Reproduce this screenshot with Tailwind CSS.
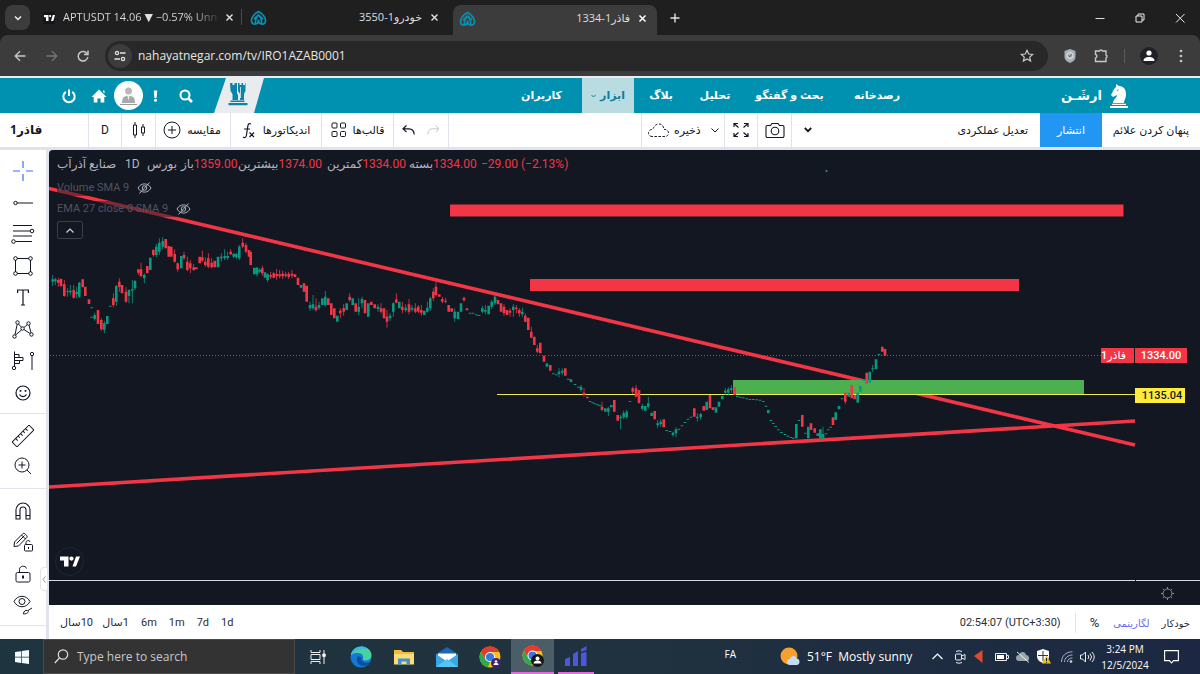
<!DOCTYPE html>
<html lang="fa">
<head>
<meta charset="utf-8">
<title>فاذر1-1334</title>
<script src="https://cdn.jsdelivr.net/npm/@tailwindcss/browser@4"></script>
</head>
<body class="flex h-screen flex-col overflow-hidden bg-[#1f1f1f] font-['Open_Sans','DejaVu_Sans',sans-serif] text-[#131722]">

<!-- Browser tabs -->
<div class="flex h-[35px] shrink-0 items-end bg-[#1f1f1f] text-[11px] text-[#dfdfdf]">
  <button aria-label="Search tabs" class="mb-[5px] ml-[5px] flex h-[25px] w-[25px] items-center justify-center rounded-lg bg-[#3c3c3c]">
    <svg width="10" height="10" viewBox="0 0 10 10" fill="none" stroke="#eee" stroke-width="1.5"><path d="M2 3.500 5 6.500 8 3.500"/></svg>
  </button>
  <div class="flex h-[35px] w-[211px] items-center gap-2 pl-[13px] pr-3">
    <svg class="shrink-0" width="12" height="12" viewBox="0 0 12 12"><rect width="12" height="12" rx="2" fill="#15161c"/><path d="M1 3h4.500v6H3V5.300H1zM8 9h2.300L12 3H9.800z" fill="#fff"/><circle cx="7.200" cy="4.100" r="1.100" fill="#fff"/></svg>
    <span class="shrink-0 whitespace-nowrap bg-linear-to-r from-[#dfdfdf] from-85% to-[#3a3a3a] bg-clip-text text-transparent">APTUSDT 14.06 ▼ −0.57% Unn</span>
    <button aria-label="Close" class="ml-auto"><svg width="9" height="9" viewBox="0 0 9 9" stroke="#e3e3e3" stroke-width="1.400"><path d="M1.500 1.500l6 6M7.500 1.500l-6 6"/></svg></button>
  </div>
  <div class="mb-2.5 h-4 w-px bg-[#4a4a4a]"></div>
  <div class="flex h-[35px] w-[211px] items-center pl-2 pr-3.5">
    <svg width="17" height="16" viewBox="0 0 17 16" fill="none" stroke="#0b8fb0" stroke-width="1.700"><path d="M7.500 6.500C6 8 5 10 5.500 14 3 14.500 1.500 13 1.500 10.500c0-3.500 2.500-5.500 4-7L8.500 1.500l3 2c1.500 1.500 4 3.500 4 7 0 2.500-1.500 4-4 3.500C12 10 11 8 9.500 6.500M5.500 14c2.500 0 3-2 3-4.500 0 2.500.5 4.500 3 4.500M4 9l4.500-4L13 9"/></svg>
    <span dir="rtl" class="ml-auto mr-2">خودرو1-3550</span>
    <button aria-label="Close"><svg width="9" height="9" viewBox="0 0 9 9" stroke="#e3e3e3" stroke-width="1.400"><path d="M1.500 1.500l6 6M7.500 1.500l-6 6"/></svg></button>
  </div>
  <div class="flex h-[30px] w-[204px] items-center rounded-t-lg bg-[#3c3c3c] pb-[3px] pl-1.5 pr-2.5">
    <svg width="17" height="16" viewBox="0 0 17 16" fill="none" stroke="#0b8fb0" stroke-width="1.700"><path d="M7.500 6.500C6 8 5 10 5.500 14 3 14.500 1.500 13 1.500 10.500c0-3.500 2.500-5.500 4-7L8.500 1.500l3 2c1.500 1.500 4 3.500 4 7 0 2.500-1.500 4-4 3.500C12 10 11 8 9.500 6.500M5.500 14c2.500 0 3-2 3-4.500 0 2.500.5 4.500 3 4.500M4 9l4.500-4L13 9"/></svg>
    <span dir="rtl" class="ml-auto mr-2">فاذر1-1334</span>
    <button aria-label="Close"><svg width="9" height="9" viewBox="0 0 9 9" stroke="#fff" stroke-width="1.500"><path d="M1.500 1.500l6 6M7.500 1.500l-6 6"/></svg></button>
  </div>
  <button aria-label="New tab" class="flex h-[35px] w-[36px] items-center justify-center"><svg width="10" height="10" viewBox="0 0 10 10" stroke="#e3e3e3" stroke-width="1.400"><path d="M5 .5v9M.5 5h9"/></svg></button>
  <div class="ml-auto flex h-[35px] items-center">
    <button aria-label="Minimize" class="flex w-10 justify-center"><svg width="10" height="10" viewBox="0 0 10 10" stroke="#ddd"><path d="M.5 5.500h9"/></svg></button>
    <button aria-label="Restore" class="flex w-10 justify-center"><svg width="10" height="10" viewBox="0 0 10 10" fill="none" stroke="#eee"><path d="M1 3h6v6H1zM3 3V1h6v6H7"/></svg></button>
    <button aria-label="Close window" class="flex w-10 justify-center"><svg width="10" height="10" viewBox="0 0 10 10" stroke="#eee"><path d="M1 1l8.500 8.500M9.500 1 1 9.500"/></svg></button>
  </div>
</div>

<!-- Address bar -->
<div class="flex h-[41px] shrink-0 items-center rounded-t-lg bg-[#3c3c3c] text-[12px] text-[#e6e6e6]">
  <button aria-label="Back" class="ml-3 flex w-4 justify-center"><svg width="12" height="12" viewBox="0 0 12 12" fill="none" stroke="#c7c7c7" stroke-width="1.300"><path d="M11.500 6H1.500M6 1.200 1.200 6 6 10.800"/></svg></button>
  <button aria-label="Forward" class="ml-4 flex w-4 justify-center"><svg width="12" height="12" viewBox="0 0 12 12" fill="none" stroke="#757575" stroke-width="1.300"><path d="M.5 6h10M6 1.200 10.800 6 6 10.800"/></svg></button>
  <button aria-label="Reload" class="ml-[11px] flex w-6 justify-center"><svg width="12" height="12" viewBox="0 0 12 12" fill="none" stroke="#c7c7c7" stroke-width="1.500"><path d="M10.300 4A4.800 4.800 0 1 0 10.800 7M11 .5V4.500H7"/></svg></button>
  <div class="ml-2.5 mr-1.5 flex h-[30px] flex-1 items-center rounded-full bg-[#282828] pl-[3px] pr-3.5">
    <button aria-label="Site information" class="flex h-[24px] w-[24px] items-center justify-center rounded-full bg-[#3c3c3c]"><svg width="12" height="12" viewBox="0 0 12 12" fill="none" stroke="#e3e3e3" stroke-width="1.300"><circle cx="3" cy="3" r="1.600"/><path d="M6 3h5.500M.5 9h5.500"/><circle cx="9" cy="9" r="1.600"/></svg></button>
    <input aria-label="Address" value="nahayatnegar.com/tv/IRO1AZAB0001" class="ml-1.5 min-w-0 flex-1 bg-transparent outline-none">
    <button aria-label="Bookmark"><svg width="14" height="14" viewBox="0 0 14 14" fill="none" stroke="#ccc" stroke-width="1.200"><path d="M7 1.300 8.700 5l4 .4-3 2.700.9 4L7 10l-3.600 2.100.9-4-3-2.700 4-.4z"/></svg></button>
  </div>
  <div class="ml-2.5 flex items-center">
    <svg width="12" height="16" viewBox="0 0 12 16"><path d="M6 1 11.500 3v6c0 3-3 5-5.500 6C3.500 14 .5 12 .5 9V3z" fill="#aab0b5"/><circle cx="6" cy="7.500" r="3" fill="none" stroke="#e5e8ea"/><path d="m4.500 7.500 1.200 1.300 2-2.500" fill="none" stroke="#555"/></svg>
    <svg class="ml-[18px]" width="15" height="15" viewBox="0 0 15 15" fill="none" stroke="#c7c7c7" stroke-width="1.400"><path d="M1.500 3h4a1.600 1.600 0 0 1 3 0H12v4a1.600 1.600 0 0 1 0 3v3.500H1.500V10a1.800 1.800 0 0 0 0-3.500z"/></svg>
    <div class="mx-[15px] h-3.5 w-px bg-[#5c5c5c]"></div>
    <svg width="18" height="18" viewBox="0 0 18 18"><circle cx="9" cy="9" r="9" fill="#202124"/><circle cx="9" cy="6" r="2.600" fill="#fff"/><path d="M3.500 14c0-3 2.500-4 5.500-4s5.500 1 5.500 4z" fill="#fff"/></svg>
    <button aria-label="Menu" class="ml-[21px] mr-[17px]"><svg width="4" height="14" viewBox="0 0 4 14" fill="#c7c7c7"><circle cx="2" cy="2" r="1.300"/><circle cx="2" cy="7" r="1.300"/><circle cx="2" cy="12" r="1.300"/></svg></button>
  </div>
</div>

<!-- Site header -->
<header class="flex h-[37px] shrink-0 items-stretch border-t-2 border-[#e8eef0] bg-[#0090b0] text-[11px] font-bold text-white">
  <div class="flex w-[214px] items-center pl-[61px]">
    <a href="#" aria-label="خروج"><svg width="16" height="16" viewBox="0 0 16 16" fill="none" stroke="#fff" stroke-width="2"><path d="M4.800 3.800a5.700 5.700 0 1 0 6.400 0M8 1.500V8"/></svg></a>
    <a href="#" aria-label="خانه" class="ml-3.5"><svg width="16" height="14" viewBox="0 0 16 14" fill="#fff"><path d="M8 .5 15.500 8H13.300v5.500H9.600V9.500H6.400v4H2.700V8H.5zM12 1.500h1.500v3L12 3z"/></svg></a>
    <a href="#" aria-label="پروفایل" class="ml-[7px]"><svg width="29" height="29" viewBox="0 0 29 29"><circle cx="14.500" cy="14.500" r="14.500" fill="#fff"/><circle cx="14.500" cy="10" r="3.500" fill="#b9b9b9"/><path d="M8 22c0-6 2-7 6.500-7s6.500 1 6.500 7z" fill="#a9a9a9"/><path d="M6 23.500h17" stroke="#999"/><path d="m13.500 15 1 5 1-5z" fill="#eee"/></svg></a>
    <a href="#" aria-label="اعلان" class="ml-2.5"><svg width="5" height="12" viewBox="0 0 5 12" fill="#fff"><path d="M.8.500h3.400L3.600 8H1.400z"/><circle cx="2.500" cy="10.300" r="1.500"/></svg></a>
    <a href="#" aria-label="جستجو" class="ml-[21px]"><svg width="14" height="14" viewBox="0 0 14 14" fill="none" stroke="#fff" stroke-width="2"><circle cx="6" cy="6" r="4.500"/><path d="m9.500 9.500 3.500 3.500" stroke-width="2.600"/></svg></a>
  </div>
  <a href="#" aria-label="رخ"><svg width="50" height="35" viewBox="0 0 50 35"><path d="M12 0h38L40 35H0z" fill="#e8ecee"/><g fill="#0b84a8"><path d="M16 5h2.500v2h2V5h2.500v10l1 2v5h-5.500v-6L16.500 13zM24 5h1.500v2h2V5H29v2h2V5h.5v8l-1.500 3v6h-4v-6l-2-3zM16.500 22.500h14V24h-14zM14.500 25h19v2.200h-19z"/></g><path d="M23.500 8v8M26.500 9v11" stroke="#e8ecee" stroke-width=".8"/></svg></a>
  <nav class="ml-auto flex items-stretch whitespace-nowrap" aria-label="منو">
    <a href="#" class="flex w-[81px] items-center justify-center">کاربران</a>
    <a href="#" class="flex w-[52px] items-center justify-center gap-1 bg-[#b9dbe2] text-[#0b7f9e]"><svg width="5" height="4" viewBox="0 0 5 4" fill="none" stroke="#0b7f9e"><path d="m.5 1 2 2 2-2"/></svg>ابزار</a>
    <a href="#" class="flex w-[54px] items-center justify-center">بلاگ</a>
    <a href="#" class="flex w-[54px] items-center justify-center">تحلیل</a>
    <a href="#" class="flex w-[95px] items-center justify-center">بحث و گفتگو</a>
    <a href="#" class="flex w-[80px] items-center justify-center">رصدخانه</a>
  </nav>
  <a href="#" class="ml-[144px] mr-[71px] flex items-center gap-1.5 text-[13px]"><span class="w-[42px]">ارشَـن</span>
    <svg width="20" height="24" viewBox="0 0 20 24" fill="#fff"><path d="M4 19c0-4 4-5 4-8l-4 2-2-2 3-6 2-2V0l3 2c5 0 7 4 7 8 0 5-2 6-2 9zM3 19.800h14v1.200H3zM1 22h18v2H1z"/><path d="M8 6.500 9.500 6" stroke="#0090b0"/></svg>
  </a>
</header>

<!-- Chart toolbar -->
<div class="flex h-[37px] shrink-0 items-stretch border-b-3 border-[#e0e3eb] bg-white text-[11px] whitespace-nowrap *:border-[#e0e3eb]">
  <button class="flex w-[88px] items-center pl-2.5 text-[12px] font-bold"><bdi dir="rtl">فاذر1</bdi></button>
  <button class="w-[33px] border-l font-['Roboto'] text-[12px]">D</button>
  <button aria-label="Candles" class="flex w-[34px] items-center justify-center border-l"><svg width="14" height="18" viewBox="0 0 14 18" fill="none" stroke="#131722"><path d="M1.500 4h3v10h-3zM3 1v3M3 14v3M9.500 6h3v6h-3zM11 3v3M11 12v3"/></svg></button>
  <button class="flex w-[75px] items-center justify-center gap-1.5 border-l pr-0.5"><svg width="18" height="18" viewBox="0 0 18 18" fill="none" stroke="#131722"><circle cx="9" cy="9" r="8"/><path d="M9 5v8M5 9h8"/></svg>مقایسه</button>
  <button class="flex w-[91px] items-center justify-center gap-2 border-l"><svg width="13" height="17" viewBox="0 0 13 17" fill="none" stroke="#131722" stroke-width="1.200"><path d="M9 2C6.500.5 6 2.500 5.500 6L4.500 13c-.5 3-2 3-3.500 2M2 7h6M7.500 10.500l4.500 4.500M12 10.500 7.500 15"/></svg>اندیکاتورها</button>
  <button class="flex w-[72px] items-center justify-center gap-1.5 border-l"><svg width="16" height="16" viewBox="0 0 16 16" fill="none" stroke="#131722"><rect x="1" y="1" width="5" height="5" rx="1"/><rect x="9.500" y="1" width="5" height="5" rx="1"/><rect x="1" y="9.500" width="5" height="5" rx="1"/><rect x="9.500" y="9.500" width="5" height="5" rx="1"/></svg>قالب‌ها</button>
  <div class="flex w-[56px] items-center justify-center gap-3 border-x">
    <button aria-label="Undo"><svg width="13" height="10" viewBox="0 0 13 10" fill="none" stroke="#131722" stroke-width="1.200"><path d="M4.500.5 1 3.800l3.500 3.300M1 3.800h6c3 0 5 1.500 5.200 5.700"/></svg></button>
    <button aria-label="Redo"><svg width="13" height="10" viewBox="0 0 13 10" fill="none" stroke="#c5c8d0"><path d="M8.500.5 12 3.800 8.500 7.100M12 3.800H6C3 3.800 1 5.300.8 9.500"/></svg></button>
  </div>
  <div class="flex-[57]"></div>
  <button class="flex w-[83px] items-center justify-center gap-1 border-l"><svg width="22" height="16" viewBox="0 0 22 16" fill="none" stroke="#131722" stroke-dasharray="2.500 1.500"><path d="M4 14.500a3.500 3.500 0 0 1 0-7C5.500 7.500 6 2 11 2c4 0 4.500 3.500 5 5.500 2-.5 4.500 1 4.500 3.500 0 2-1.500 3.500-3 3.500z"/></svg>ذخیره<svg class="ml-1.5" width="8" height="5" viewBox="0 0 8 5" fill="none" stroke="#131722"><path d="m.5.500 3.500 3.500L7.500.500"/></svg></button>
  <button aria-label="Fullscreen" class="flex w-[33px] items-center justify-center border-l"><svg width="16" height="16" viewBox="0 0 16 16" fill="none" stroke="#131722" stroke-width="1.200"><path d="M1 5V1.500h4M1 1.500l4.500 4M15 5V1.500h-4M15 1.500l-4.500 4M1 11v3.500h4M1 14.500l4.500-4M15 11v3.500h-4M15 14.500l-4.500-4"/></svg></button>
  <button aria-label="Snapshot" class="flex w-[35px] items-center justify-center border-x"><svg width="20" height="17" viewBox="0 0 20 17" fill="none" stroke="#131722" stroke-width="1.100"><path d="M2.500 3.500h3l1.500-2h6l1.500 2h3a1.500 1.500 0 0 1 1.500 1.500v9a1.500 1.500 0 0 1-1.500 1.500h-15A1.500 1.500 0 0 1 1 14V5a1.500 1.500 0 0 1 1.500-1.500z"/><circle cx="10" cy="9" r="3.800"/></svg></button>
  <button aria-label="More" class="ml-3"><svg width="8" height="6" viewBox="0 0 8 6" fill="none" stroke="#131722" stroke-width="1.800"><path d="m.8 1 3.200 3.200L7.200 1"/></svg></button>
  <div class="flex-[43]"></div>
  <button class="mr-3">تعدیل عملکردی</button>
  <button class="w-[62px] bg-[#2196f3] text-white">انتشار</button>
  <button class="w-[98px]">پنهان کردن علائم</button>
</div>

<main class="flex min-h-0 flex-1 bg-[#e0e3eb]">
  <!-- Drawing tools -->
  <aside class="relative mr-[3px] flex w-[46px] shrink-0 flex-col bg-white [&_button]:flex [&_button]:h-7 [&_button]:items-center [&_button]:justify-center">
    <div class="flex h-[264px] flex-col justify-between border-b border-[#e0e3eb] pb-1.5 pt-[7px]">
      <button aria-label="Crosshair"><svg width="20" height="20" viewBox="0 0 20 20" stroke="#3d6df5" stroke-width="1.200"><path d="M10 0v7M10 13v7M0 10h7M13 10h7"/></svg></button>
      <button aria-label="Trend line"><svg width="20" height="6" viewBox="0 0 20 6" fill="none" stroke="#131722"><circle cx="2.500" cy="3" r="1.700"/><path d="M4 3h16"/></svg></button>
      <button aria-label="Fib retracement"><svg width="24" height="20" viewBox="0 0 24 20" fill="none" stroke="#131722"><path d="M2 1.500h19M2 7h17M2 12h19M4.500 17.500H21"/><circle cx="21" cy="7" r="1.800" fill="#fff"/><circle cx="2.500" cy="17.500" r="1.800"/></svg></button>
      <button aria-label="Shapes"><svg width="20" height="20" viewBox="0 0 20 20" fill="none" stroke="#131722"><path d="M4 2.500h12M4 17.500h12M2.500 4v12M17.500 4v12"/><circle cx="2.500" cy="2.500" r="1.800"/><circle cx="17.500" cy="2.500" r="1.800"/><circle cx="2.500" cy="17.500" r="1.800"/><circle cx="17.500" cy="17.500" r="1.800"/></svg></button>
      <button aria-label="Text"><svg width="12" height="17" viewBox="0 0 12 17" fill="none" stroke="#131722" stroke-width="1.200"><path d="M.6 4V1h10.800v3M6 1v15M4 16h4"/></svg></button>
      <button aria-label="Patterns"><svg width="22" height="19" viewBox="0 0 22 19" fill="none" stroke="#131722"><circle cx="5.500" cy="2.500" r="1.700"/><circle cx="16.500" cy="3.500" r="1.700"/><circle cx="10.500" cy="8.500" r="1.700"/><circle cx="2.500" cy="16.500" r="1.700"/><circle cx="19.500" cy="14.500" r="1.700"/><path d="M5.200 4.200 3 14.800M6.500 4l3 3.300M12 7.500l3.200-2.800M17 5.200l2 7.600M3.500 15l6-5M12 9.500l6 4"/></svg></button>
      <button aria-label="Positions"><svg width="24" height="20" viewBox="0 0 24 20" fill="none" stroke="#131722"><path d="M3.500.5V15M3.500 3.500H8v3h4v3H8.500v3h-5M3.500 6.500H8M3.500 9.500h5M21 5v14"/><circle cx="3" cy="17" r="1.700"/><circle cx="21" cy="3" r="1.700"/></svg></button>
      <button aria-label="Emoji"><svg width="16" height="16" viewBox="0 0 16 16" fill="none" stroke="#131722" stroke-width="1.200"><circle cx="8" cy="8" r="7"/><path d="M4.500 9.500c1.500 2.800 5.500 2.800 7 0"/><path d="M5.500 5v1.800M10.500 5v1.800" stroke-width="1.700"/></svg></button>
    </div>
    <div class="flex h-[75px] flex-col justify-between border-b border-[#e0e3eb] py-2">
      <button aria-label="Measure"><svg width="22" height="22" viewBox="0 0 22 22" fill="none" stroke="#131722"><g transform="rotate(-45 11 11)"><rect x="-1" y="7.500" width="24" height="7" rx="1"/><path d="M4 7.500v3M7.500 7.500v2.500M11 7.500v3M14.500 7.500v2.500M18 7.500v3"/></g></svg></button>
      <button aria-label="Zoom in"><svg width="18" height="18" viewBox="0 0 18 18" fill="none" stroke="#131722"><circle cx="8" cy="8" r="7"/><path d="M8 4.500v7M4.500 8h7M13 13l4 4"/></svg></button>
    </div>
    <div class="flex h-[137px] flex-col justify-between border-b border-[#e0e3eb] pb-1.5 pt-2">
      <button aria-label="Magnet"><svg width="16" height="18" viewBox="0 0 16 18" fill="none" stroke="#131722" stroke-width="1.100"><path d="M1 17V8a7 7 0 0 1 14 0v9h-4V8a3 3 0 0 0-6 0v9zM1 13.500h4M11 13.500h4"/></svg></button>
      <button aria-label="Keep drawing"><svg width="21" height="20" viewBox="0 0 21 20" fill="none" stroke="#131722"><path d="m1.500 10 8.500-8.500c1-1 5 2.500 4 3.800L5.500 14l-4.500.5zM3.500 11.500l8-8M8.500 3l4 4"/><rect x="11.500" y="12.500" width="8" height="6.500" rx="1"/><path d="M13 12.500v-2c0-2.500 4-2.500 4-.5M15.500 15v2"/></svg></button>
      <button aria-label="Lock"><svg width="16" height="18" viewBox="0 0 16 18" fill="none" stroke="#131722"><rect x="1" y="7.500" width="14" height="9.500" rx="1.500"/><path d="M4.500 7.500V4.500c0-4 6-4.500 7-1"/><path d="M8 10.500v3" stroke-width="2"/></svg></button>
      <button aria-label="Hide"><svg width="20" height="20" viewBox="0 0 20 20" fill="none" stroke="#131722"><path d="M1 6.500C4.500-.5 13.500-.5 17 6.500c-3.500 7-12.500 7-16 0z"/><circle cx="9" cy="6.500" r="3"/><path d="M10.500 19c0-3 2-4 4-3.500s.5 3.500-4 3.500zM15 15.500l4-2.500"/></svg></button>
    </div>
    <button aria-label="Collapse" class="absolute bottom-[48px] right-[-2px] !h-6 w-2 rounded-l border border-[#e0e3eb] bg-white"><svg width="4" height="7" viewBox="0 0 4 7" fill="none" stroke="#9598a1"><path d="M3.500.5 1 3.500l2.500 3"/></svg></button>
  </aside>

  <section class="flex min-w-0 flex-1 flex-col">
    <div class="relative min-h-0 flex-1 rounded-tl bg-[#131722]">
      <svg id="chart" class="absolute inset-0 h-full w-full" viewBox="49 150 1151 455" preserveAspectRatio="none" role="img" aria-label="نمودار فاذر1">
        <path d="M50 355.500H1101" stroke="#8a5560" stroke-dasharray="1 2"/>
        <g stroke="#f23645" stroke-width="3.600"><path d="M49 188.500 1135 445M49 487 1135 421"/></g>
        <path d="M450 204.500H1123.500V216.500H450zM530 279H1019V291H530z" fill="#f23645"/>
        <path d="M733 380H1084V394H733z" fill="#4caf50"/>
        <path d="M497 394.500H1135" stroke="#f0ec50" stroke-width="1.200"/>
        <g id="candles"></g>
        <path d="M49 580.500H1135M1136 580.500H1200" stroke="#d6d9e0"/>
        <circle cx="826.500" cy="171" r="1" fill="#3aa655"/>
      </svg>

      <!-- Legend -->
      <div class="absolute left-2 top-1.5 flex flex-col items-start text-[11px] text-[#b2b5be]">
        <div class="flex h-4 items-center whitespace-nowrap font-['Roboto','DejaVu_Sans'] text-[12px]">
          <span class="w-[68px]">صنایع آذرآب</span><span class="w-[22px]">1D</span><span class="w-[34px]">بورس</span>
          <span class="flex w-[57px] text-[#f23645]"><span class="text-[#b2b5be]">باز</span>1359.00</span>
          <span class="flex w-[89px] text-[#f23645]"><span class="text-[#b2b5be]">بیشترین</span>1374.00</span>
          <span class="flex w-[82px] text-[#f23645]"><span class="text-[#b2b5be]">کمترین</span>1334.00</span>
          <span class="flex w-[72px] text-[#f23645]"><span class="text-[#b2b5be]">بسته</span>1334.00</span>
          <span class="text-[#f23645]">−29.00 (−2.13%)</span>
        </div>
        <div class="mt-2 flex h-4 items-center gap-2 bg-[#131722]/50 font-['Roboto'] text-[#50535e]">Volume SMA 9
          <svg width="15" height="12" viewBox="0 0 15 12" fill="none" stroke="#b2b5be"><path d="M1 6C4 .5 11 .5 14 6c-3 5.500-10 5.500-13 0zM12.500.5l-10 11"/><circle cx="7.500" cy="6" r="2.300"/></svg></div>
        <div class="mt-[5px] flex h-4 items-center gap-2 bg-[#131722]/50 font-['Roboto'] text-[#50535e]">EMA 27 close 0 SMA 9
          <svg width="15" height="12" viewBox="0 0 15 12" fill="none" stroke="#b2b5be"><path d="M1 6C4 .5 11 .5 14 6c-3 5.500-10 5.500-13 0zM12.500.5l-10 11"/><circle cx="7.500" cy="6" r="2.300"/></svg></div>
        <button aria-label="Collapse legend" class="mt-1 flex h-[18px] w-[26px] items-center justify-center rounded-xs border border-[#3a3e4a]"><svg width="8" height="5" viewBox="0 0 8 5" fill="none" stroke="#d1d4dc" stroke-width="1.200"><path d="m.5 4.500 3.500-3.500 3.500 3.500"/></svg></button>
      </div>

      <!-- Price labels -->
      <div class="absolute right-[13px] top-[43.600%] flex h-[15px] gap-px text-[11px] leading-[15px] text-white">
        <span dir="rtl" class="w-[33px] bg-[#f23645] pr-2 font-['Roboto','DejaVu_Sans'] font-medium">فاذر1</span><span class="w-[52px] bg-[#f23645] text-center font-['Roboto'] font-medium">1334.00</span>
      </div>
      <span class="absolute right-[15px] top-[52.200%] h-[15px] w-[50px] bg-[#ffeb3b] pl-1 text-center font-['Roboto'] text-[11px] font-medium leading-[15px] text-[#131722]">1135.04</span>

      <svg class="absolute bottom-[29px] left-1.5" width="29" height="29" viewBox="0 0 29 29"><circle cx="14.500" cy="14.500" r="14" fill="#131722" stroke="#232733"/><path d="M5 9.500h8.500v10H9v-6H5zM17.500 19.500 21 9.500h4L21 19.500z" fill="#fff"/><circle cx="16.500" cy="11.600" r="2.100" fill="#fff"/></svg>
      <button aria-label="Settings" class="absolute bottom-[5px] right-[26px]"><svg width="13" height="13" viewBox="0 0 13 13" fill="none" stroke="#868993"><circle cx="6.500" cy="6.500" r="4.500"/><path d="M6.500 0v2M6.500 11v2M0 6.500h2M11 6.500h2M1.900 1.900l1.400 1.400M9.700 9.700l1.400 1.400M11.100 1.900 9.700 3.300M3.300 9.700l-1.400 1.400"/></svg></button>
    </div>

    <!-- Range bar -->
    <div class="flex h-[34px] shrink-0 items-center whitespace-nowrap bg-white pl-3.5 pr-2.5 pt-0.5 font-['Roboto','DejaVu_Sans'] text-[11px] text-[#2a2e39]">
      <button dir="rtl" class="w-[30px]">10سال</button>
      <button dir="rtl" class="ml-3 w-[24px]">1سال</button>
      <button class="ml-3">6m</button>
      <button class="ml-3">1m</button>
      <button class="ml-3">7d</button>
      <button class="ml-3">1d</button>
      <button class="ml-auto mr-3.5">02:54:07 (UTC+3:30)</button>
      <button class="h-5 border-l border-[#e0e3eb] pl-3.5 text-[13px]">%</button>
      <button class="ml-3.5 text-[10px] text-[#6a6af5]">لگاریتمی</button>
      <button class="ml-3 text-[10px]">خودکار</button>
    </div>
  </section>
</main>

<!-- Taskbar -->
<footer class="flex h-[35px] shrink-0 items-stretch bg-linear-to-r from-[#1e343e] via-[#20323f] to-[#1c2843] text-white">
  <button aria-label="Start" class="flex w-[43px] items-center justify-center"><svg width="14" height="14" viewBox="0 0 14 14" fill="#f2fbff"><path d="M0 2l6-.8v5.500H0zM6.700 1 14 0v6.700H6.700zM0 7.400h6v5.500L0 12zM6.700 7.400H14V14l-7.300-1z"/></svg></button>
  <label class="flex w-[252px] items-center gap-2 border border-[#4b4b4b] bg-[#333] pl-2.5">
    <svg width="15" height="15" viewBox="0 0 15 15" fill="none" stroke="#e0e0e0" stroke-width="1.200"><circle cx="9" cy="5.500" r="4.700"/><path d="M5.500 9 .8 14"/></svg>
    <input aria-label="Search" placeholder="Type here to search" class="min-w-0 flex-1 bg-transparent text-[12px] outline-none placeholder:text-[#c8c8c8]">
  </label>
  <div class="ml-px flex [&>button]:flex [&>button]:w-[43px] [&>button]:items-center [&>button]:justify-center">
    <button aria-label="Task view"><svg width="16" height="14" viewBox="0 0 16 14" fill="none" stroke="#eee"><path d="M1 0v2.500h9V0M1 14v-2.500h9V14M1 4.500h9v5H1zM14 0v14"/><path d="M12.800 4h2.400v2.500h-2.400z" fill="#fff"/></svg></button>
    <button aria-label="Edge"><svg width="22" height="22" viewBox="0 0 22 22"><circle cx="11" cy="11" r="10.500" fill="#1478d4"/><path d="M1 9C2 3.500 6.500.5 11.500.5 17.500.5 21.500 5 21.500 9c0 4-3 5.500-6 5.500-2 0-3-.7-2.500-2 1-2.500-1-5.500-5-5.500C5 7 2 7.500 1 9z" fill="#4bd1a0"/><path d="M1 9C2 3.500 6.500.5 11.500.5c3 0 5 1 7 3-5-2-12 0-17.500 5.500z" fill="#38b9e8"/><path d="M8 10c-3 4 0 10 5.500 10 3 0 5-1.500 6.500-4-4 2-9.500.5-8.500-4.500z" fill="#0c4fa0"/></svg></button>
    <button aria-label="Files"><svg width="20" height="18" viewBox="0 0 20 18"><path d="M0 2h7l2 2h11v12H0z" fill="#f5b93b"/><path d="M0 6h20v10.500H0z" fill="#ffda76"/><path d="M4 10.500h12v6h-3.500v-3h-5v3H4z" fill="#3f93d2"/></svg></button>
    <button aria-label="Mail"><svg width="22" height="20" viewBox="0 0 22 20"><path d="M0 7 11 0l11 7v13H0z" fill="#1769b8"/><path d="M2 6.500h18V14H2z" fill="#fff"/><path d="m0 7 11 7.500L22 7v13H0z" fill="#35a8e8"/><path d="m0 20 11-8 11 8z" fill="#58c2f4"/></svg></button>
    <button aria-label="Chrome"><svg width="22" height="22" viewBox="0 0 22 22"><circle cx="11" cy="11" r="10.500" fill="#fbc116"/><path d="M11 .5A10.500 10.500 0 0 1 20.500 6H11L6.500 13.500 1.900 5.700A10.500 10.500 0 0 1 11 .5z" fill="#e33b2e"/><path d="M1.900 5.700 6.500 13.500 11 16l-2 5.300A10.500 10.500 0 0 1 1.900 5.700z" fill="#2da94f"/><circle cx="11" cy="11" r="5" fill="#fff"/><circle cx="11" cy="11" r="4" fill="#3578e5"/><circle cx="17" cy="17" r="5" fill="#3c2470"/><circle cx="17" cy="15.500" r="1.300" fill="#fff"/><path d="M14.500 19c0-3 5-3 5 0z" fill="#fff"/></svg></button>
    <button aria-label="Chrome, active" class="border-b-2 border-[#e070d8] bg-[#4b5d66]"><svg width="22" height="22" viewBox="0 0 22 22"><circle cx="10.500" cy="10.500" r="10" fill="#fbc116"/><path d="M11 .5A10.500 10.500 0 0 1 20 6H11L6.500 13.500 1.900 5.700A10.500 10.500 0 0 1 11 .5z" fill="#e33b2e"/><path d="M1.900 5.700 6.500 13.500 11 16l-2 4.500A10.500 10.500 0 0 1 1.900 5.700z" fill="#2da94f"/><circle cx="10.500" cy="10.500" r="5" fill="#fff"/><circle cx="10.500" cy="10.500" r="4" fill="#3578e5"/><circle cx="15.500" cy="15.500" r="6.500" fill="#151515"/><circle cx="15.500" cy="13.500" r="2" fill="#fff"/><path d="M11.500 18.500c0-4 8-4 8 0z" fill="#fff"/></svg></button>
    <button aria-label="Trading app" class="ml-1 !w-9 border-b-2 border-[#e070d8]"><svg width="22" height="20" viewBox="0 0 22 20" fill="#4b57dc"><path d="M0 13l5-2v9H0zM8 8l5-3v15H8zM16 3l5.500-3v4L16 6zM16 7.500l5.500-2V20H16z"/></svg></button>
  </div>
  <div class="ml-auto flex items-center text-[12px] whitespace-nowrap">
    <span class="mr-11 pb-1 text-[10px]">FA</span>
    <svg width="20" height="19" viewBox="0 0 20 19"><circle cx="9" cy="9" r="8.500" fill="#f6a12d"/><path d="M10 18a3 3 0 0 1 0-6c1-4 6-4 6.500-.5 4 0 4 6.500 0 6.500z" fill="#c3dcf5"/></svg>
    <span class="ml-[7px] w-[104px]">51°F&nbsp; Mostly sunny</span>
    <button aria-label="Hidden icons" class="ml-[21px]"><svg width="11" height="7" viewBox="0 0 11 7" fill="none" stroke="#fff" stroke-width="1.200"><path d="m.5 6 5-5 5 5"/></svg></button>
    <svg class="ml-[11px]" width="12" height="14" viewBox="0 0 12 14" fill="none" stroke="#eee"><rect x="1.500" y="4" width="6" height="6" rx="1"/><path d="M7.500 6 11 4.500v5L7.500 8M2 1.500q3-1.500 6 0M2 12.500q3 1.500 6 0"/></svg>
    <svg class="ml-2" width="9" height="13" viewBox="0 0 9 13"><path d="M0 6 8.500 0v13z" fill="#dc4b2c"/></svg>
    <svg class="ml-3" width="14" height="8" viewBox="0 0 14 8"><path d="M.5.500h11v7H.5zM12 2.500h1.500v3H12" fill="none" stroke="#eee"/><path d="M2 2h7v4H2z" fill="#fff"/></svg>
    <svg class="ml-[7px]" width="14" height="12" viewBox="0 0 14 12"><path d="M3 10a3 3 0 0 1 0-6c1-4 6.500-4 7 0 4 0 4 6 1 6z" fill="#9aa4ad"/><path d="m1 1 12 10.500" stroke="#eee"/></svg>
    <svg class="ml-[7px]" width="14" height="15" viewBox="0 0 14 15"><path d="M6 0l6 2v5c0 4-3 6-6 7-3-1-6-3-6-7V2z" fill="#fff"/><path d="M6 2v10M1 6.500h10" stroke="#334"/><path d="m9.500 6.500 4.500 8H5z" fill="#f9c20a"/><path d="M9.500 9v3M9.500 12.800v1" stroke="#222"/></svg>
    <svg class="ml-2.5" width="12" height="12" viewBox="0 0 12 12" fill="none" stroke="#aab2bd"><path d="M.5 11C.5 5 5 .8 11.500.8M3.500 11c0-4 3.500-7 8-7M6.500 11c0-2.500 2-4 5-4"/><circle cx="10" cy="10.500" r="1" fill="#fff"/></svg>
    <svg class="ml-[7px]" width="15" height="12" viewBox="0 0 15 12" fill="none" stroke="#eee"><path d="M.5 4h2l3-3v10l-3-3h-2zM8 4q1.500 2 0 4M10 2.500q3 3.500 0 7M12 1q4.500 5 0 10"/></svg>
    <div class="ml-1.5 w-[48px] text-center text-[10px] leading-4">3:24 PM<br>12/5/2024</div>
    <button aria-label="Notifications" class="ml-[15px] mr-[21px]"><svg width="15" height="14" viewBox="0 0 15 14" fill="none" stroke="#fff" stroke-width="1.100"><path d="M.6.600h13.800v10H9.500L7.500 13l-2-2.400H.6z"/></svg></button>
  </div>
</footer>

<script>
// Each segment: origin of the segment, then candles as "x top bottom [high low]" in thirds of a unit.
// Prefix r = falling, g = rising, d = flat day.
const segments = [
 [50,230,"g8 148 155 135 168,g16 148 154 143 165,r25 150 158 143 170,r33 147 168 145 172,r43 162 198 150 200,g53 184 187 175 200,g61 182 187 165 195,r71 180 203 165 206,g80 186 192 170 205,g88 158 200 155 203,r98 148 172,r106 170 198,r117 208 222,g134 255 267 248 272,r144 240 282,r154 270 298 265 302,g163 280 300 272 310,g172 258 282,d125 232,d125 260,d181 227,r190 205 225 190 232,g199 168 215 165 228,r208 155 170 145 185,r216 165 190,r228 185 215 172 218,g237 180 198 178 220,g247 178 182 150 220,g255 153 175 150 180,r265 118 128 118 135,r273 118 138 98 142,g283 135 145 130 160,r292 108 130,g301 83 120,r310 60 75 58 80,g319 50 75 42 82,g328 38 65 25 75,g338 33 50 22 58,r347 27 55,r356 48 80,r364 50 80,r374 72 95 58 98,r383 100 118 98 125,g394 78 115,r402 75 85 65 90,r412 95 120 80 124,r421 100 115 90 130,r431 112 120 102 122,r439 112 118,r449 80 100,r457 82 92 62 95,r466 95 105 82 110,r475 85 110 70 115,r485 98 112 85 115,r494 92 112,g504 80 112,g514 80 85 70 95,g524 78 85 58 90,g533 78 84 65 90,r542 65 73 58 75,g551 72 80 68 85,g559 72 82 68 88,g568 50 85 45 90,r578 38 50 25 55,r588 45 65 38 70,r597 60 80"],
 [0,145,"r752 320 360,g763 368 388,g771 368 388 365 395,g779 375 380 370 385,r787 370 385 362 392,g795 382 398,g803 388 405 385 412,r812 390 395 380 402,r821 385 398 382 400,r830 387 394 372 404,r839 388 394 375 400,r848 386 394 378 402,r857 388 392 380 398,r866 386 396 380 402,r876 386 392 375 400,r885 388 396,r894 398 420"],
 [300,145,"g3 420 428,r12 415 440,r20 422 470,g30 480 490 470 498,g39 478 490 450 495,r48 485 495 460 500,g57 480 488 470 495,g67 460 480,g76 455 480 438 485,r85 460 480,r94 475 510,r103 490 520,g112 512 530,r121 497 505 490 520,r131 490 500 478 512,g140 475 495,r149 455 465 445 470,g158 460 480,r167 475 500,g176 485 500 460 510,g186 462 475 455 490,r195 465 505,g205 475 515,r214 470 480,r224 478 490,g234 485 492 478 500,r243 490 500 475 505,r252 490 520,r261 515 530 495 548,g270 512 520 505 528,g280 475 500 472 515,r289 463 473 445 475,g298 470 490,r307 485 495 470 505,g317 488 496 478 502,r327 478 500 462 508,g336 488 494 480 500,r346 490 500 475 505,r355 485 500 480 505,r364 495 503 480 512,g373 497 510,g382 488 500 470 503,g391 460 490 455 498,r400 440 460 430 468,r408 425 450 412 455,r418 448 455,r427 462 470 455 475,r437 467 470 458 475,r446 480 500,r455 490 500,g464 500 520 490 530,g474 500 522,g483 475 500,r492 458 466 455 470,r501 490 496,d510 503,d519 503,d529 508,d537 510,g547 490 500 482 505,g556 495 500 480 508,g566 482 508,g575 470 485 465 492,g585 455 475 450 480,r594 465 478,r603 475 500,r612 485 505 478 512,r621 495 510,r630 497 503 490 515,g640 485 495 478 515,r649 488 492 480 505,r658 495 505 490 515,g667 500 508 488 515,r676 512 530 505 532,r685 518 555,r694 560 578 545 580,r703 575 600"],
 [500,300,"r112 145 155 135 160,r121 128 160,r132 167 185,g141 190 200,r151 195 212,d160 220,d169 223,g177 215 222 205 232,g187 212 218 205 225,r196 205 227,d205 236,g213 238 246,d225 252,d235 260,g243 260 270 255 275,r252 278 285 265 290,r262 290 295,d270 303,d278 307,d285 310,d293 313,d300 316,r306 320 330 305 332,g316 325 335,g325 325 335 320 348,g334 315 322,r343 300 335,r353 345 362,g362 350 355 345 388,g371 340 352 332 358,g380 335 352 330 356,d390 303,r398 265 275 260 282,r408 265 290 255 292,r417 270 310,g427 318 326 312 332,g436 318 332,g445 310 320 290 325,g455 338 348,r464 333 358,g473 370 376 360 385,g482 365 372 358 380,r491 358 382,d500 390,d510 393,g519 398 405 395 410,g528 388 400 382 412,d537 386,d546 376,d555 366,d564 356,d573 350,r583 325 350,g592 350 355 340 365,g602 342 352 338 360,r611 318 332,g620 305 330,r630 285 325,r639 322 330,g648 322 338,g657 305 320,g667 288 298,g676 272 278 265 285,g685 268 278 262 285,g694 265 270 255 280,r704 262 285,d712 288,d721 290,d730 292,d740 295,d750 297,d760 297,d770 298,d780 299"],
 [720,330,"d130 213,d138 227,g145 240 250,d153 270,d160 279,d167 288,d175 298,d184 306,d195 312,d204 317,d213 321,d220 323,g229 282 325,d237 270,r247 255 290,d256 308,g265 290 325,r273 280 300,r284 295 308,g293 310 318,g301 298 325,g309 312 328 290 328,d318 310,d325 298,d332 290,r339 262 285,g347 247 270,g357 228 238,d366 205,r376 188 215 185 222,g386 188 200,r395 165 205,r404 195 208,g413 188 218,g421 168 185,d431 150,r440 128 162,g449 125 158,g458 115 118 105 125,g468 88 118,d477 72,r487 50 65,r495 57 77"]
];
const paths = { r: ["", "#f23645"], g: ["", "#089981"] };
for (const [ox, oy, list] of segments)
  for (const item of list.split(",")) {
    const kind = item[0], n = item.slice(1).split(" ").map(Number);
    const x = ox + n[0] / 3, y = v => (oy + v / 3).toFixed(1);
    if (kind === "d") { paths.g[0] += `M${(x - 1.3).toFixed(1)} ${y(n[1])}h2.600v1h-2.600z`; continue; }
    const [, t, b, hi = t, lo = b] = n;
    paths[kind][0] += `M${(x - 1.3).toFixed(1)} ${y(t)}h2.600V${y(b)}h-2.600zM${(x - .4).toFixed(1)} ${y(hi)}h.8V${y(lo)}h-.8z`;
  }
document.getElementById("candles").innerHTML = Object.values(paths).map(([d, c]) => `<path d="${d}" fill="${c}"/>`).join("");
</script>
</body>
</html>
